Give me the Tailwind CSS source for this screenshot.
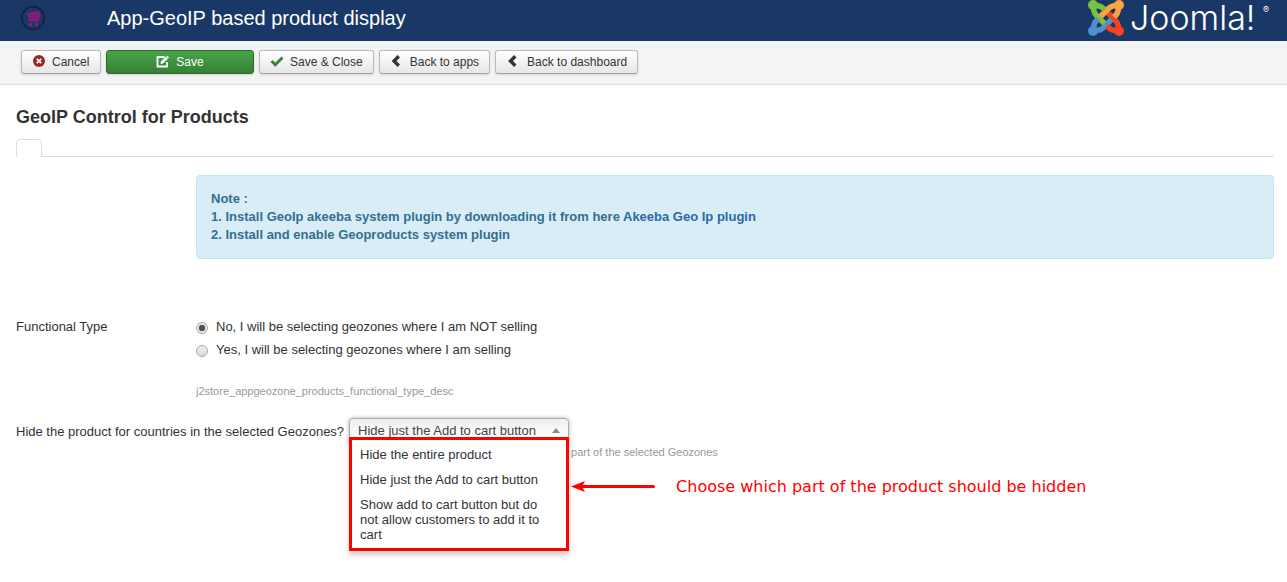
<!DOCTYPE html>
<html lang="en">
<head>
<meta charset="utf-8">
<meta name="viewport" content="width=device-width, initial-scale=1">
<title>App-GeoIP based product display</title>
<script src="https://cdn.jsdelivr.net/npm/@tailwindcss/browser@4"></script>
</head>
<body class="min-h-screen bg-white font-['Liberation_Sans',Arial,sans-serif] text-[13px] leading-[18px] text-[#333]">
<header class="flex h-[41px] items-start bg-[#1a3867] pr-[18px] pl-[21px] text-white">
  <svg class="mt-1.5 h-6 w-6 shrink-0" viewBox="0 0 24 24" fill="none" aria-hidden="true">
    <circle cx="12" cy="12" r="11.2" stroke="#17202c" stroke-width="1.4"/>
    <path d="M5 7.500l2 .3M7 7.500l11.500-1.800-1 9.300H8.500z" fill="#8d1b79" stroke="#8d1b79"/>
    <path d="M8 9.500h10M8.500 12h9M10.500 7.500v7M13 7v8M15.500 6.500v8" stroke="#5f2470" stroke-width=".5"/>
    <path d="M8 17h3v3H8zM14 17h3v3h-3z" fill="#8d1b79"/>
  </svg>
  <h1 class="ml-[62px] text-xl leading-9">App-GeoIP based product display</h1>
  <a href="#" class="ml-auto flex items-start gap-1.5" aria-label="Joomla!">
    <svg class="h-9 w-9 shrink-0" viewBox="0 0 36 36" fill="none" stroke-width="5.600" aria-hidden="true">
      <path d="M31 31L30 25Q29.500 22.500 27.500 20.500L19.500 12.500" stroke="#f44321"/>
      <path d="M5 31L11 30Q13.500 29.500 15.500 27.500L23.500 19.500" stroke="#5091cd"/>
      <path d="M5 5L6 11Q6.500 13.500 8.500 15.500L16.500 23.500" stroke="#7ac143"/>
      <path d="M31 5L25 6Q22.500 6.500 20.500 8.500L12.500 16.500" stroke="#f9a541"/>
      <path d="M5 5L11 6Q13.500 6.500 15.500 8.500L17 10" stroke="#7ac143"/>
      <path d="M31 5L30 11Q29.500 13.500 27.500 15.500L26 17" stroke="#f9a541"/>
      <path d="M31 31L25 30Q22.500 29.500 20.500 27.500L19 26" stroke="#f44321"/>
      <path d="M5 31L6 25Q6.500 22.500 8.500 20.500L10 19" stroke="#5091cd"/>
      <circle cx="5" cy="5" r="5" fill="#7ac143" stroke="none"/>
      <circle cx="31" cy="5" r="5" fill="#f9a541" stroke="none"/>
      <circle cx="5" cy="31" r="5" fill="#5091cd" stroke="none"/>
      <circle cx="31" cy="31" r="5" fill="#f44321" stroke="none"/>
    </svg>
    <span class="flex w-[139px] items-start justify-between font-['Inter',sans-serif] text-[34px] leading-9 font-light">Joomla!<span class="mt-1 text-[9px] leading-3 font-normal">®</span></span>
  </a>
</header>

<div class="flex h-11 items-start gap-[5px] border-b border-[#e0e0e0] bg-[#f4f4f4] px-[21px] pt-[9px] text-xs">
  <button type="button" class="flex h-6 w-20 items-center rounded-[3px] border border-[#bbb] border-b-[#a2a2a2] bg-linear-to-b from-white to-[#e6e6e6] px-2.5 shadow-sm">
    <svg class="mr-1.5 h-3.5 w-3.5" viewBox="0 0 14 14" aria-hidden="true"><circle cx="7" cy="6" r="6" fill="#942a25"/><path d="M4.800 3.800l4.400 4.400M9.200 3.800L4.800 8.200" stroke="#fff" stroke-width="1.800"/></svg>Cancel</button>
  <button type="button" class="flex h-6 w-[148px] items-center justify-center rounded-[3px] border border-[#2d6b2d] bg-linear-to-b from-[#46a546] to-[#378137] text-white shadow-sm">
    <svg class="mr-1.5 h-3.5 w-3.5" viewBox="0 0 14 14" fill="none" stroke="#fff" aria-hidden="true"><path d="M8.500 2H1.500v9.500h9.500V7" stroke-width="1.800"/><path d="M4.500 9l.5-2.500L10 1.500l2 2-5 5z" fill="#fff" stroke="none"/><path d="M10.700 .800l2 2" stroke-width="1.200"/></svg>Save</button>
  <button type="button" class="flex h-6 items-center rounded-[3px] border border-[#bbb] border-b-[#a2a2a2] bg-linear-to-b from-white to-[#e6e6e6] px-2.5 shadow-sm">
    <svg class="mr-1.5 h-3.5 w-3.5" viewBox="0 0 14 14" aria-hidden="true"><path d="M1.500 6l3.800 3.800L12.500 2.500" fill="none" stroke="#378137" stroke-width="2.800"/></svg>Save &amp; Close</button>
  <button type="button" class="flex h-6 items-center rounded-[3px] border border-[#bbb] border-b-[#a2a2a2] bg-linear-to-b from-white to-[#e6e6e6] px-2.5 shadow-sm">
    <svg class="mr-1.5 h-3.5 w-3.5" viewBox="0 0 14 14" aria-hidden="true"><path d="M8.800 1.200L4 6 8.800 10.800" fill="none" stroke="#333" stroke-width="3.400"/></svg>Back to apps</button>
  <button type="button" class="flex h-6 items-center rounded-[3px] border border-[#bbb] border-b-[#a2a2a2] bg-linear-to-b from-white to-[#e6e6e6] px-2.5 shadow-sm">
    <svg class="mr-[7px] h-3.5 w-3.5" viewBox="0 0 14 14" aria-hidden="true"><path d="M9.300 1.200L4.500 6 9.300 10.800" fill="none" stroke="#333" stroke-width="3.400"/></svg>Back to dashboard</button>
</div>

<main class="pt-5 pr-[13px] pb-24 pl-4">
  <h2 class="text-lg leading-6 font-bold">GeoIP Control for Products</h2>
  <div class="mt-2.5 flex h-[18px]" role="tablist">
    <button type="button" role="tab" aria-selected="true" aria-label="Basic options" class="w-[26px] rounded-t-[4px] border border-b-0 border-[#ddd] bg-white"></button>
    <div class="flex-1 border-b border-[#ddd]"></div>
  </div>

  <div class="mt-[18px] ml-[180px] rounded-[4px] border border-[#bce8f1] bg-[#d9edf7] px-3.5 py-3.5 font-bold text-[#31708f]">
    <p>Note :</p>
    <p>1. Install GeoIp akeeba system plugin by downloading it from here <a href="#" class="text-[#2a69a6]">Akeeba Geo Ip plugin</a></p>
    <p>2. Install and enable Geoproducts system plugin</p>
  </div>

  <fieldset class="mt-[59px] flex">
    <legend class="float-left w-[180px]">Functional Type</legend>
    <div>
      <label class="flex items-center gap-2">
        <input type="radio" name="type" checked class="mt-0.5 h-3 w-3 appearance-none rounded-full border border-[#aaa] bg-linear-to-b from-[#eee] to-[#ddd] checked:bg-[radial-gradient(circle,#555_0_3px,#e6e6e6_3.5px)]">No, I will be selecting geozones where I am NOT selling</label>
      <label class="mt-[5px] flex items-center gap-2">
        <input type="radio" name="type" class="mt-0.5 h-3 w-3 appearance-none rounded-full border border-[#aaa] bg-linear-to-b from-[#eee] to-[#ddd] checked:bg-[radial-gradient(circle,#555_0_3px,#e6e6e6_3.5px)]">Yes, I will be selecting geozones where I am selling</label>
      <p class="mt-[23px] text-[11px] text-[#999]">j2store_appgeozone_products_functional_type_desc</p>
    </div>
  </fieldset>

  <div class="mt-[18px] flex items-start">
    <label for="hide" class="mt-[5px] mr-[5px] shrink-0">Hide the product for countries in the selected Geozones?</label>
    <div class="relative w-[220px] shrink-0">
      <select id="hide" class="block h-[26px] w-full appearance-none rounded-t-[4px] border border-[#aaa] bg-linear-to-b from-[#eee] to-white to-80% pl-2 text-[13px] text-[#444] shadow-[0_0_4px_rgba(0,0,0,.3)]">
        <option>Hide the entire product</option>
        <option selected>Hide just the Add to cart button</option>
        <option>Show add to cart button but do not allow customers to add it to cart</option>
      </select>
      <svg class="pointer-events-none absolute top-2.5 right-[9px] h-[5px] w-[8px]" viewBox="0 0 8 5" aria-hidden="true"><path d="M4 0l4 5H0z" fill="#888"/></svg>
      <ul role="listbox" aria-label="Product visibility" class="absolute top-[19px] left-0 w-full border-3 border-[#f00] bg-white px-2 pt-[7px] pb-1.5 leading-[15px] shadow-[0_4px_5px_rgba(0,0,0,.2)]">
        <li role="option" class="pb-2.5">Hide the entire product</li>
        <li role="option" class="pb-2.5">Hide just the Add to cart button</li>
        <li role="option">Show add to cart button but do not allow customers to add it to cart</li>
      </ul>
    </div>
    <div class="ml-0.5 pt-[25px]">
      <p class="text-[11px] text-[#999]">part of the selected Geozones</p>
      <div class="mt-4 flex items-center gap-[21px] text-[#f00]">
        <svg class="h-3 w-[84px]" viewBox="0 0 84 12" aria-hidden="true"><path d="M10 5.500H82.500" stroke="#f00" stroke-width="3" stroke-linecap="round"/><path d="M0 5.500L14 0l-3 5.500 3 5.500z" fill="#f00"/></svg>
        <p class="font-['DejaVu_Sans',sans-serif] text-base leading-5">Choose which part of the product should be hidden</p>
      </div>
    </div>
  </div>
</main>
</body>
</html>
